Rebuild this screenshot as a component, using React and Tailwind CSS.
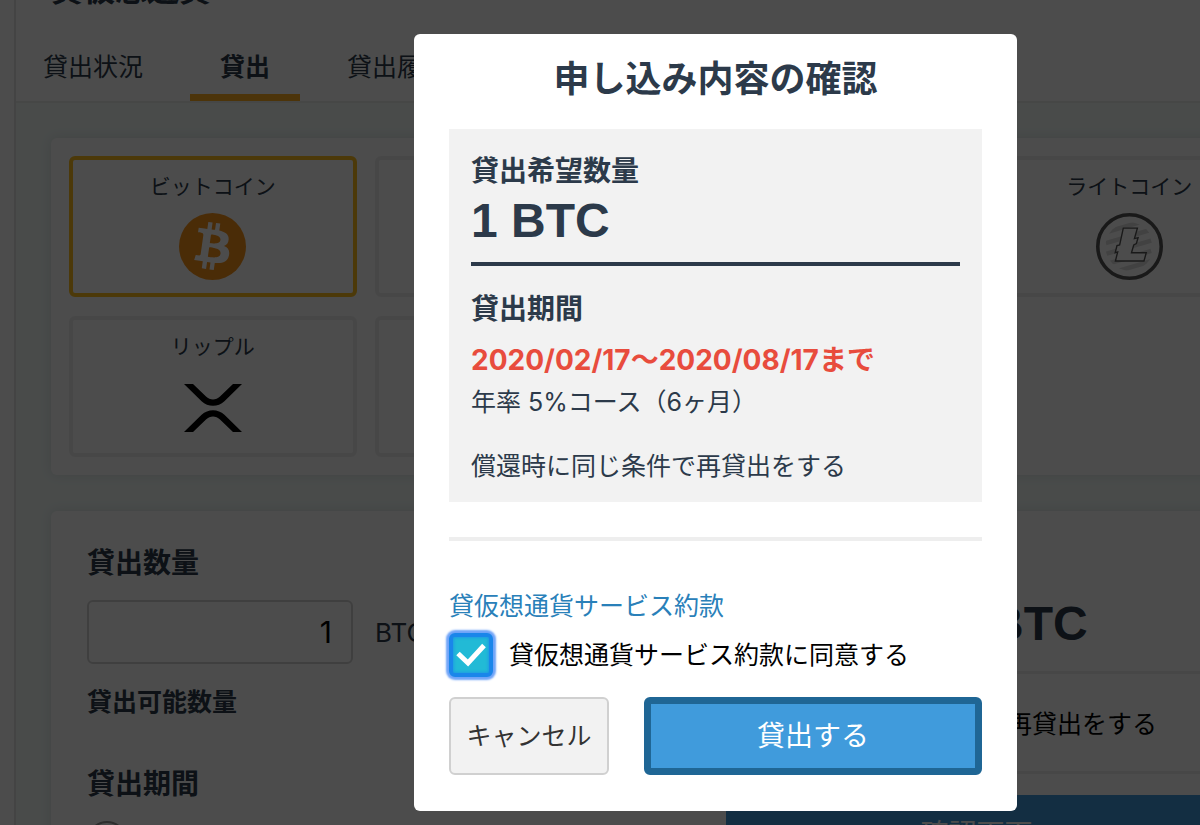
import React from 'react';

function BitcoinIcon() {
  return (
    <svg viewBox="0 0 64 64" className="size-[67px]" aria-hidden="true">
      <circle cx="32" cy="32" r="32" fill="#f7931a" />
      <path
        fill="#fff"
        transform="translate(32 32) rotate(-6) scale(1.14) translate(-32 -32)"
        d="M46.1 27.44c.64-4.26-2.6-6.55-7.04-8.08l1.44-5.77-3.51-.88-1.4 5.62c-.93-.23-1.88-.45-2.82-.66l1.41-5.66-3.51-.87-1.44 5.77c-.77-.17-1.52-.35-2.24-.53v-.02l-4.85-1.21-.93 3.75s2.6.6 2.55.64c1.42.35 1.68 1.3 1.64 2.04l-1.64 6.57c.1.03.22.06.36.12l-.37-.09-2.3 9.21c-.17.43-.61 1.08-1.61.83.04.05-2.55-.63-2.55-.63l-1.74 4.02 4.57 1.14c.85.21 1.68.44 2.5.65l-1.45 5.84 3.5.87 1.45-5.77c.96.26 1.89.5 2.8.73l-1.44 5.74 3.52.88 1.45-5.83c6 1.14 10.5.68 12.4-4.74 1.53-4.37-.08-6.89-3.23-8.53 2.3-.53 4.03-2.04 4.49-5.15zm-8.03 11.26c-1.09 4.37-8.44 2.01-10.82 1.42l1.93-7.74c2.38.6 10.03 1.77 8.89 6.32zm1.09-11.32c-.99 3.97-7.11 1.95-9.09 1.46l1.75-7.02c1.98.5 8.37 1.42 7.34 5.56z"
      />
    </svg>
  );
}

function LitecoinIcon() {
  return (
    <svg viewBox="0 0 68 68" className="size-[67px]" aria-hidden="true">
      <defs>
        <clipPath id="ltc-disc">
          <circle cx="34" cy="34" r="24.5" />
        </clipPath>
      </defs>
      <circle cx="34" cy="34" r="32.2" fill="#fff" stroke="#555" strokeWidth="3.6" />
      <g clipPath="url(#ltc-disc)" stroke="#dedede" strokeWidth="4.6">
        <path d="M10 19.500 56 6M10 30.500 56 17M10 41.500 56 28M10 52 56 38.500M10 62.500 56 49" />
      </g>
      <path
        d="M27.700 15.300H42L39 26l3.700-1-1.700 6-2.700 1.500-2.300 7.800h15l-2.300 8.400h-29L22 39.500l-2.500.8 1.800-7.300 2.700-.7z"
        fill="#fff"
        stroke="#555"
        strokeWidth="1.4"
      />
    </svg>
  );
}

function XrpIcon() {
  return (
    <svg viewBox="0 0 58 48" className="my-[11px] h-[48px] w-[58px]" aria-hidden="true">
      <path d="M0 0h9l13 12.600c4.200 4 9.800 4 14 0L49 0h9L40.400 17.200c-6.400 6.200-16.400 6.200-22.800 0z" />
      <path d="M0 48h9l13-12.600c4.200-4 9.800-4 14 0L49 48h9L40.400 30.800c-6.400-6.200-16.400-6.200-22.800 0z" />
    </svg>
  );
}

function CoinCard({ name, selected, children }) {
  return (
    <button
      type="button"
      className={
        'flex h-[141px] flex-col items-center rounded-md border-4 bg-white pt-3 text-[21px] leading-[30px] ' +
        (selected ? 'border-[#ffc021]' : 'border-[#efefef]')
      }
    >
      <span>{name}</span>
      <span className="mt-[11px]">{children}</span>
    </button>
  );
}

function Amount({ children }) {
  return (
    <span className="font-['Liberation_Sans','Noto_Sans_CJK_JP',sans-serif] text-[48px] font-bold leading-[60px]">
      {children}
    </span>
  );
}

function Page() {
  return (
    <div className="flex min-w-[1312px] bg-white text-[#2c3a4a]">
      <div className="w-4 shrink-0 border-r-2 border-[#e4e4e4]" />
      <main className="grow bg-[#f3fbf9]">
        <header className="border-b-2 border-[#e9edec] bg-white">
          <h1 className="-mt-[26px] pl-[35px] text-[32px] font-bold leading-8">貸仮想通貨</h1>
          <nav className="flex gap-[47px] pl-[27px] pt-[27px] text-[25px] leading-[54px]">
            <a href="#status" className="border-y-[7px] border-transparent">貸出状況</a>
            <a href="#lend" className="border-b-[7px] border-[#ffad22] px-[30px] pt-[7px] font-bold">貸出</a>
            <a href="#history" className="border-y-[7px] border-transparent">貸出履歴</a>
          </nav>
        </header>

        <div className="flex flex-col gap-9 pb-10 pl-[35px] pr-[21px] pt-[35px]">
          <section className="grid grid-cols-4 gap-x-[18px] gap-y-[19px] rounded-md bg-white p-[18px] shadow-[0_0_12px_rgba(0,0,0,0.1)]">
            <CoinCard name="ビットコイン" selected><BitcoinIcon /></CoinCard>
            <CoinCard name="イーサリアム" />
            <CoinCard name="リスク" />
            <CoinCard name="ライトコイン"><LitecoinIcon /></CoinCard>
            <CoinCard name="リップル"><XrpIcon /></CoinCard>
            <CoinCard name="ネム" />
          </section>

          <section className="grid grid-cols-2 gap-x-[110px] rounded-md bg-white px-9 pb-9 pt-8 shadow-[0_0_12px_rgba(0,0,0,0.1)]">
            <div>
              <label htmlFor="amount" className="block text-[28px] font-bold leading-10">貸出数量</label>
              <div className="mt-[17px] flex items-center gap-[22px]">
                <input
                  id="amount"
                  defaultValue="1"
                  className="h-16 w-[266px] rounded-md border-2 border-[#d4d4d4] pr-[19px] text-right text-[30px] text-black"
                />
                <span className="text-[26px]">BTC</span>
              </div>
              <h3 className="mt-[18px] text-[25px] font-bold leading-10">貸出可能数量</h3>
              <h3 className="mt-[42px] text-[28px] font-bold leading-10">貸出期間</h3>
              <input
                type="radio"
                name="term"
                aria-label="6ヶ月"
                className="mt-[17px] size-10 appearance-none rounded-full border-2 border-[#999]"
              />
            </div>
            <div>
              <p className="mt-[51px] flex pl-[223px]"><Amount>1 BTC</Amount></p>
              <div className="mt-[17px] flex h-[103px] items-center border-y-[3px] border-[#eee] pt-1">
                <input id="renew" type="checkbox" className="size-10 appearance-none rounded border-2 border-[#999]" />
                <label htmlFor="renew" className="whitespace-nowrap pl-4 text-[25px] text-black">
                  償還時に同じ条件で再貸出をする
                </label>
              </div>
              <button type="button" className="mt-[21px] h-[78px] w-full bg-[#4299dc] text-[28px] text-white">
                確認画面へ
              </button>
            </div>
          </section>
        </div>
      </main>
    </div>
  );
}

function ConfirmDialog() {
  return (
    <div className="fixed inset-0 flex items-start justify-center overflow-hidden bg-black/70 pl-[231px] pt-[34px]">
      <div
        role="dialog"
        aria-modal="true"
        aria-labelledby="confirm-title"
        className="w-[603px] rounded-md bg-white px-[35px] pb-9 pt-[23px] text-[25px] leading-[44px] text-[#2c3a4a]"
      >
        <h2 id="confirm-title" className="text-center text-[36px] font-bold">申し込み内容の確認</h2>

        <div className="mt-7 bg-[#f2f2f2] px-[22px] pb-[14px] pt-[22px]">
          <h3 className="text-[28px] font-bold leading-10">貸出希望数量</h3>
          <p className="flex border-b-4 border-[#2c3a4a] pb-[11px]"><Amount>1 BTC</Amount></p>
          <h3 className="mt-[23px] text-[28px] font-bold leading-10">貸出期間</h3>
          <p className="mt-[11px] whitespace-nowrap text-[28px] font-bold leading-10 text-[#e84c3d]">
            2020/02/17〜2020/08/17まで
          </p>
          <p>年率 5%コース（6ヶ月）</p>
          <p className="mt-5">償還時に同じ条件で再貸出をする</p>
        </div>

        <hr className="mt-[35px] border-t-4 border-[#eee]" />

        <a href="#terms" className="mt-[45px] block leading-10 text-[#2980b9]">貸仮想通貨サービス約款</a>

        <div className="mt-[6px] flex h-[45px] items-center">
          <span className="grid shrink-0 place-items-center">
            <input
              id="agree"
              type="checkbox"
              defaultChecked
              className="col-start-1 row-start-1 size-11 appearance-none rounded-md border-4 border-[#1a86ea] bg-[#22bad6] shadow-[0_0_2px_3px_#6fa4f8,inset_0_0_3px_1px_#1e9be2]"
            />
            <svg viewBox="0 0 30 25" className="pointer-events-none col-start-1 row-start-1 h-[25px] w-[30px]" aria-hidden="true">
              <path d="M2 11.500 12 21 28 3.500" fill="none" stroke="#fff" strokeWidth="5" />
            </svg>
          </span>
          <label htmlFor="agree" className="whitespace-nowrap pl-4 text-black">
            貸仮想通貨サービス約款に同意する
          </label>
        </div>

        <div className="mt-5 flex gap-[35px]">
          <button type="button" className="h-[78px] w-40 rounded-md border-2 border-[#d0d0d0] bg-[#f2f2f2] text-[#333]">
            キャンセル
          </button>
          <button type="button" className="h-[78px] grow rounded-md border-[7px] border-[#1f6695] bg-[#409bdc] text-[28px] text-white">
            貸出する
          </button>
        </div>
      </div>
    </div>
  );
}

export default function App() {
  return (
    <div lang="ja" className="h-screen overflow-hidden font-[Inter,'Noto_Sans_CJK_JP',sans-serif]">
      <Page />
      <ConfirmDialog />
    </div>
  );
}
